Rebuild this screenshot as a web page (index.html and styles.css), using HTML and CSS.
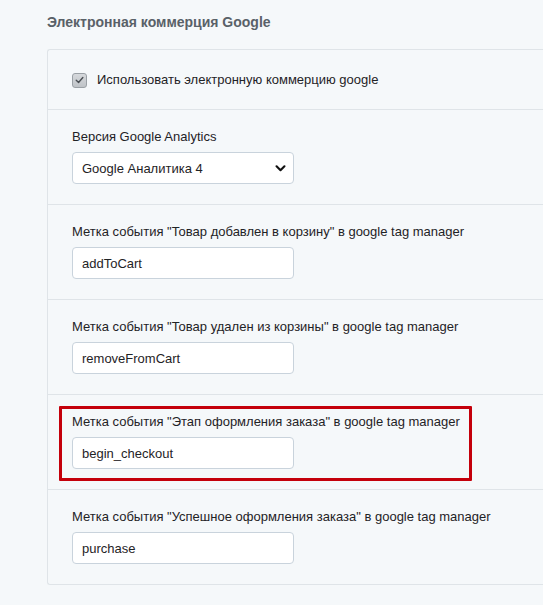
FILE: index.html
```html
<!DOCTYPE html>
<html lang="ru">
<head>
<meta charset="utf-8">
<title>Электронная коммерция Google</title>
<link rel="stylesheet" href="styles.css">
</head>
<body>
<div class="page">
  <h3 class="section-title">Электронная коммерция Google</h3>
  <div class="panel">
    <div class="row row-check">
      <label class="check">
        <span class="check-box">
          <svg viewBox="0 0 14 14" width="14" height="14"><path d="M3.5 7.2 L6 9.6 L10.6 4.4" fill="none" stroke="#4a4f54" stroke-width="1.5" stroke-linecap="round" stroke-linejoin="round"/></svg>
        </span>
        <span>Использовать электронную коммерцию google</span>
      </label>
    </div>
    <div class="row">
      <div class="field-label">Версия Google Analytics</div>
      <div class="select-wrap">
        <select class="control">
          <option>Google Аналитика 4</option>
        </select>
        <svg class="chevron" viewBox="0 0 12 8" width="11" height="7"><path d="M1.5 1.5 L6 6 L10.5 1.5" fill="none" stroke="#111" stroke-width="2.4" stroke-linecap="round" stroke-linejoin="round"/></svg>
      </div>
    </div>
    <div class="row">
      <div class="field-label">Метка события "Товар добавлен в корзину" в google tag manager</div>
      <input class="control" type="text" value="addToCart">
    </div>
    <div class="row">
      <div class="field-label">Метка события "Товар удален из корзины" в google tag manager</div>
      <input class="control" type="text" value="removeFromCart">
    </div>
    <div class="row highlight">
      <div class="field-label">Метка события "Этап оформления заказа" в google tag manager</div>
      <input class="control" type="text" value="begin_checkout">
    </div>
    <div class="row">
      <div class="field-label">Метка события "Успешное оформления заказа" в google tag manager</div>
      <input class="control" type="text" value="purchase">
    </div>
  </div>
</div>
</body>
</html>
```

FILE: styles.css
```css
html, body {
  margin: 0;
  padding: 0;
  background: #f5f8fa;
}

body {
  font-family: "Liberation Sans", Arial, sans-serif;
  font-size: 13px;
  color: #1f2326;
}

.page {
  padding: 13px 0 0 47px;
}

.section-title {
  margin: 0 0 18px 0;
  font-size: 14px;
  line-height: 18px;
  font-weight: bold;
  color: #596168;
}

.panel {
  border: 1px solid #dfe4e8;
  border-right: none;
  border-radius: 3px 0 0 3px;
  background: #f5f8fa;
}

.row {
  position: relative;
  padding: 18px 24px 20px 24px;
  border-top: 1px solid #dfe4e8;
}

.row:first-child {
  border-top: none;
}

.row-check {
  padding: 21px 24px 20px 24px;
}

.check {
  display: flex;
  align-items: center;
  gap: 10px;
  line-height: 18px;
}

.check-box {
  width: 13px;
  height: 13px;
  border: 1px solid #9aa0a5;
  border-radius: 3px;
  background: linear-gradient(#d6d9dc, #bfc3c7);
  display: flex;
  align-items: center;
  justify-content: center;
}

.check-box svg {
  display: block;
}

.field-label {
  line-height: 18px;
  margin-bottom: 6px;
}

.control {
  display: block;
  box-sizing: border-box;
  width: 222px;
  height: 32px;
  margin: 0;
  padding: 0 9px;
  border: 1px solid #c9d3dc;
  border-radius: 4px;
  background: #fff;
  font-family: "Liberation Sans", Arial, sans-serif;
  font-size: 13px;
  color: #1f2326;
  outline: none;
}

.select-wrap {
  position: relative;
  width: 222px;
}

select.control {
  appearance: none;
  -webkit-appearance: none;
  padding-left: 9px;
}

.chevron {
  position: absolute;
  right: 8px;
  top: 13px;
  pointer-events: none;
}

/* red frame drawn over the checkout step field */
.highlight::after {
  content: "";
  position: absolute;
  left: 11px;
  top: 11px;
  width: 407px;
  height: 69px;
  border: 3px solid #c4000b;
  border-radius: 1px;
  pointer-events: none;
}
```
